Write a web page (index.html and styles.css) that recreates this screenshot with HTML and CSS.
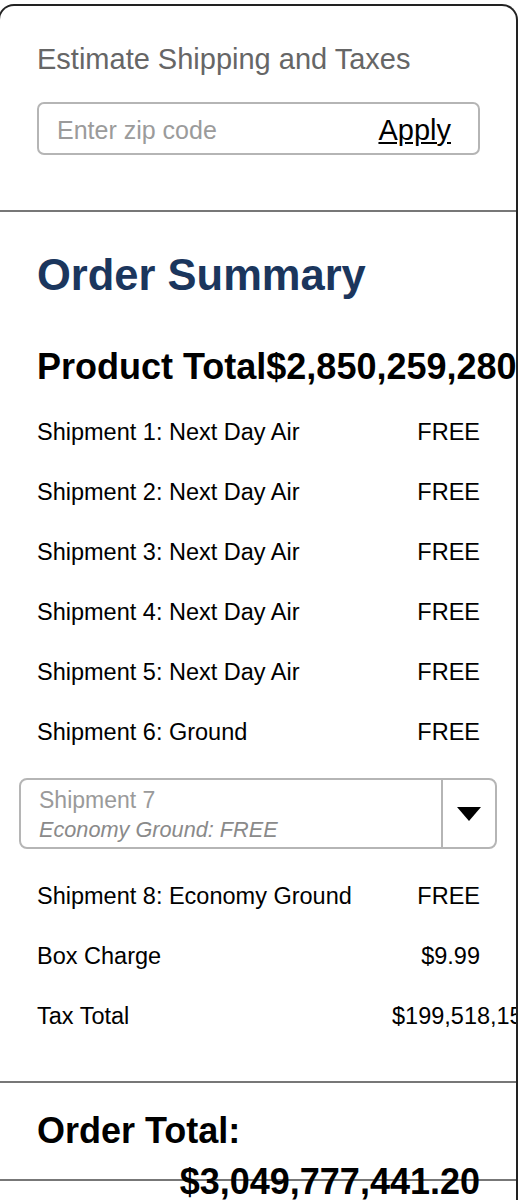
FILE: index.html
```html
<!DOCTYPE html>
<html lang="en">
<head>
<meta charset="utf-8">
<title>Order Summary</title>
<link rel="stylesheet" href="styles.css">
</head>
<body>
<div class="card">
  <section class="ship">
    <h2 class="ship-title">Estimate Shipping and Taxes</h2>
    <div class="zip">
      <span class="zip-ph">Enter zip code</span>
      <a class="zip-apply" href="#">Apply</a>
    </div>
  </section>
  <section class="summary">
    <h1 class="summary-title">Order Summary</h1>
    <div class="product-total"><span>Product Total</span><span>$2,850,259,280.00</span></div>
    <ul class="lines">
      <li class="line"><span class="line-label">Shipment 1: Next Day Air</span><span class="line-value">FREE</span></li>
      <li class="line"><span class="line-label">Shipment 2: Next Day Air</span><span class="line-value">FREE</span></li>
      <li class="line"><span class="line-label">Shipment 3: Next Day Air</span><span class="line-value">FREE</span></li>
      <li class="line"><span class="line-label">Shipment 4: Next Day Air</span><span class="line-value">FREE</span></li>
      <li class="line"><span class="line-label">Shipment 5: Next Day Air</span><span class="line-value">FREE</span></li>
      <li class="line"><span class="line-label">Shipment 6: Ground</span><span class="line-value">FREE</span></li>
      <li class="select">
        <div class="select-text">
          <div class="select-name">Shipment 7</div>
          <div class="select-opt">Economy Ground: FREE</div>
        </div>
        <div class="select-btn">
          <svg width="24" height="14" viewBox="0 0 24 14"><polygon points="0,0 24,0 12,14" fill="#000"/></svg>
        </div>
      </li>
      <li class="line"><span class="line-label">Shipment 8: Economy Ground</span><span class="line-value">FREE</span></li>
      <li class="line"><span class="line-label">Box Charge</span><span class="line-value">$9.99</span></li>
      <li class="line"><span class="line-label">Tax Total</span><span class="line-value">$199,518,151.21</span></li>
    </ul>
  </section>
  <section class="total">
    <div class="total-row"><span>Order Total:</span><span class="total-value">$3,049,777,441.20</span></div>
  </section>
  <section class="after"></section>
</div>
</body>
</html>
```
FILE: styles.css
```css
body {
  margin: 0;
  background: #fff;
  font-family: "Liberation Sans", Arial, sans-serif;
  color: #000;
}

.card {
  box-sizing: border-box;
  width: 520px;
  margin: 4px 0 0 -2px;
  border: 2px solid #222;
  border-bottom: none;
  border-radius: 16px 16px 0 0;
  overflow: hidden;
}

.ship {
  padding: 36px 36px 55px 37px;
}

.ship-title {
  margin: 0;
  font-size: 29px;
  line-height: 34px;
  font-weight: 400;
  color: #666;
}

.zip {
  margin-top: 26px;
  height: 53px;
  box-sizing: border-box;
  border: 2px solid #b5b5b5;
  border-radius: 7px;
  display: flex;
  align-items: center;
  justify-content: space-between;
  padding: 3px 27px 0 18px;
}

.zip-ph {
  font-size: 25px;
  color: #9b9b9b;
}

.zip-apply {
  font-size: 29px;
  color: #000;
  text-decoration: underline;
}

.summary {
  border-top: 2px solid #777;
  padding: 38px 36px 35px 37px;
}

.summary-title {
  margin: 0;
  font-size: 43.5px;
  line-height: 50px;
  font-weight: 700;
  color: #1b365d;
}

.product-total {
  margin-top: 45px;
  display: flex;
  font-size: 36px;
  line-height: 44px;
  font-weight: 700;
  white-space: nowrap;
}

.lines {
  list-style: none;
  margin: 13px 0 0;
  padding: 0;
}

.line {
  display: flex;
  align-items: center;
  height: 60px;
  font-size: 23.5px;
}

.line-label {
  flex: 1;
  min-width: 0;
  white-space: nowrap;
}

.line-value {
  flex: 0 0 88px;
  min-width: 0;
  display: flex;
  justify-content: flex-end;
  justify-content: safe flex-end;
  white-space: nowrap;
}

.select {
  display: flex;
  height: 71px;
  box-sizing: border-box;
  margin: 16px -17px 17px -18px;
  border: 2px solid #b5b5b5;
  border-radius: 8px;
}

.select-text {
  flex: 1;
  padding: 5px 0 0 18px;
}

.select-name {
  font-size: 23px;
  line-height: 30px;
  color: #9a9a9a;
}

.select-opt {
  font-size: 21.7px;
  line-height: 30px;
  font-style: italic;
  color: #8a8a8a;
}

.select-btn {
  box-sizing: border-box;
  width: 54px;
  border-left: 2px solid #b5b5b5;
  display: flex;
  align-items: center;
  justify-content: center;
}

.total {
  box-sizing: border-box;
  height: 98px;
  border-top: 2px solid #777;
  padding: 22px 36px 0 37px;
}

.total-row {
  display: flex;
  flex-wrap: wrap;
  font-size: 36px;
  line-height: 51px;
  font-weight: 700;
}

.total-value {
  margin-left: auto;
}

.after {
  border-top: 2px solid #777;
  height: 200px;
}
```
